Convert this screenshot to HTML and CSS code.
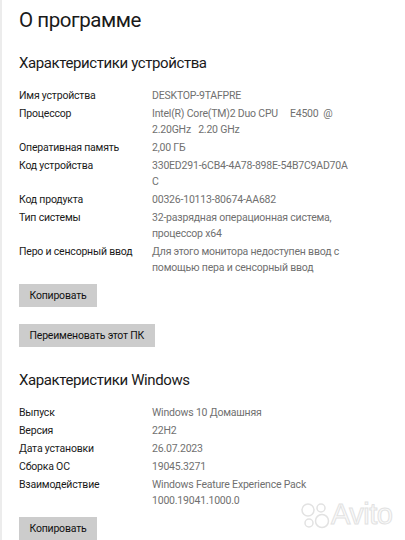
FILE: index.html
```html
<!DOCTYPE html>
<html lang="ru">
<head>
<meta charset="utf-8">
<title>О программе</title>
<link rel="stylesheet" href="styles.css">
</head>
<body>
<div class="page">
  <h1 class="title">О программе</h1>

  <h2 class="section">Характеристики устройства</h2>
  <div class="specs">
    <div class="row"><div class="label">Имя устройства</div><div class="value">DESKTOP-9TAFPRE</div></div>
    <div class="row"><div class="label">Процессор</div><div class="value pre">Intel(R) Core(TM)2 Duo CPU     E4500  @<br>2.20GHz   2.20 GHz</div></div>
    <div class="row"><div class="label">Оперативная память</div><div class="value">2,00 ГБ</div></div>
    <div class="row"><div class="label">Код устройства</div><div class="value">330ED291-6CB4-4A78-898E-54B7C9AD70A<br>C</div></div>
    <div class="row"><div class="label">Код продукта</div><div class="value">00326-10113-80674-AA682</div></div>
    <div class="row"><div class="label">Тип системы</div><div class="value">32-разрядная операционная система,<br>процессор x64</div></div>
    <div class="row"><div class="label">Перо и сенсорный ввод</div><div class="value">Для этого монитора недоступен ввод с<br>помощью пера и сенсорный ввод</div></div>
  </div>
  <button class="btn btn-first">Копировать</button>
  <button class="btn btn-second">Переименовать этот ПК</button>

  <h2 class="section section-win">Характеристики Windows</h2>
  <div class="specs">
    <div class="row"><div class="label">Выпуск</div><div class="value">Windows 10 Домашняя</div></div>
    <div class="row"><div class="label">Версия</div><div class="value">22H2</div></div>
    <div class="row"><div class="label">Дата установки</div><div class="value">26.07.2023</div></div>
    <div class="row"><div class="label">Сборка ОС</div><div class="value">19045.3271</div></div>
    <div class="row"><div class="label">Взаимодействие</div><div class="value">Windows Feature Experience Pack<br>1000.19041.1000.0</div></div>
  </div>
  <button class="btn btn-first">Копировать</button>
</div>
<div class="watermark">
  <svg class="wm-logo" width="30" height="28" viewBox="0 0 30 28">
    <circle cx="8" cy="9" r="6" fill="none" stroke="#e2e2e2" stroke-width="1.5"/>
    <circle cx="21" cy="7" r="4" fill="none" stroke="#e2e2e2" stroke-width="1.5"/>
    <circle cx="9" cy="22" r="4" fill="none" stroke="#e2e2e2" stroke-width="1.5"/>
    <circle cx="22" cy="20" r="6.5" fill="none" stroke="#e2e2e2" stroke-width="1.5"/>
  </svg>
  <span class="wm-text">Avito</span>
</div>
</body>
</html>
```
FILE: styles.css
```css
html, body {
  margin: 0;
  padding: 0;
  background: #fff;
}
body {
  width: 405px;
  height: 540px;
  overflow: hidden;
  border-left: 2px solid #ececec;
  box-sizing: border-box;
  position: relative;
  font-family: Roboto, "Noto Sans", sans-serif;
  color: #1a1a1a;
}
.page {
  padding: 6px 0 0 17px;
  display: flex;
  flex-direction: column;
  align-items: flex-start;
}
.title {
  margin: 0;
  font-size: 20.5px;
  font-weight: 400;
  line-height: 28px;
  letter-spacing: -0.45px;
}
.section {
  margin: 18px 0 0;
  font-size: 15px;
  font-weight: 400;
  line-height: 22px;
  letter-spacing: -0.4px;
}
.section-win {
  margin-top: 22px;
}
.specs {
  margin-top: 14px;
  display: flex;
  flex-direction: column;
  gap: 2px;
}
.row {
  display: grid;
  grid-template-columns: 133px 1fr;
  font-size: 10.5px;
  line-height: 16px;
  letter-spacing: -0.2px;
}
.label {
  color: #1a1a1a;
}
.value {
  color: #707070;
}
.pre {
  white-space: pre;
}
.btn {
  font-family: inherit;
  font-size: 10.5px;
  letter-spacing: -0.2px;
  color: #111;
  background: #cccccc;
  border: none;
  border-radius: 0;
  height: 23px;
  padding: 0 10.5px;
  line-height: 23px;
}
.btn-first {
  margin-top: 8px;
}
.btn-second {
  margin-top: 17px;
}
.watermark {
  position: absolute;
  left: 298px;
  top: 498px;
  display: flex;
  align-items: center;
  gap: 1px;
}
.wm-text {
  font-family: "Liberation Sans", sans-serif;
  font-size: 29px;
  color: #fbfbfb;
  -webkit-text-stroke: 1px #e2e2e2;
  letter-spacing: -0.5px;
}
```
